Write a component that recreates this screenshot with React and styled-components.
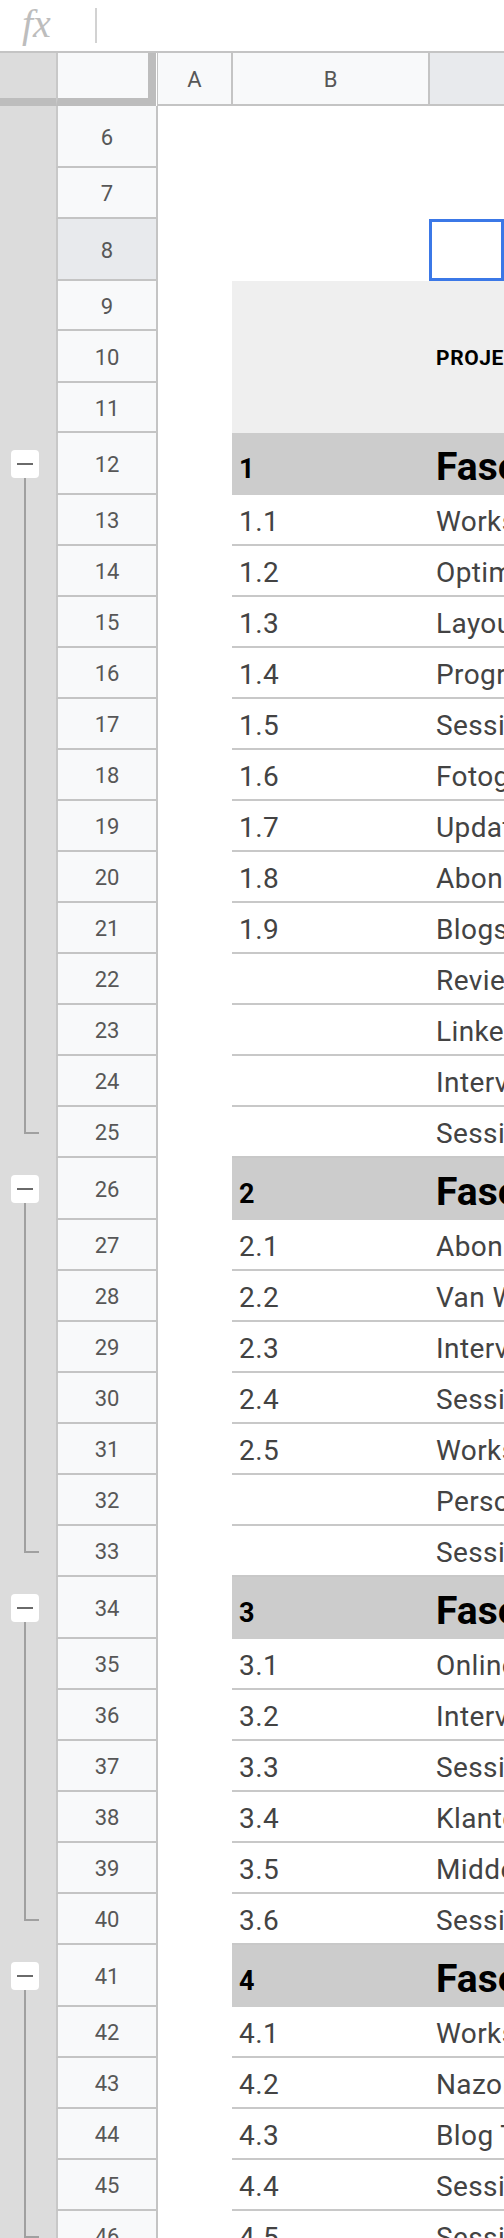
import React from 'react';
import styled, { createGlobalStyle } from 'styled-components';

const Global = createGlobalStyle`
  html, body { margin: 0; padding: 0; background: #fff; }
  body {
    width: 504px;
    height: 2238px;
    overflow: hidden;
    font-family: Roboto, "Noto Sans", Arial, sans-serif;
  }
`;

const Page = styled.div`
  width: 504px;
  height: 2238px;
  overflow: hidden;
  background: #fff;
`;

const FormulaBar = styled.div`
  height: 51px;
  border-bottom: 2px solid #c4c4c4;
  display: flex;
  align-items: center;
`;

const Fx = styled.span`
  font-family: "Liberation Serif", "DejaVu Serif", serif;
  font-style: italic;
  font-size: 40px;
  line-height: 1;
  color: #bdbdbd;
  margin-left: 22px;
  width: 73px;
  margin-top: -4px;
`;

const Divider = styled.div`
  width: 2px;
  height: 35px;
  background: #d2d2d2;
`;

const HeaderRow = styled.div`
  display: flex;
  height: 53px;
`;

const GutterCorner = styled.div`
  width: 56px;
  box-sizing: border-box;
  background: #dcdcdc;
  border-bottom: 8px solid #bdbdbd;
`;

const Corner = styled.div`
  width: 102px;
  box-sizing: border-box;
  border-right: 1px solid #c4c4c4;
  display: flex;
`;

const CornerFill = styled.div`
  width: 100px;
  box-sizing: border-box;
  background: #f8f9fa;
  border-left: 2px solid #c8c8c8;
  border-right: 8px solid #bdbdbd;
  border-bottom: 8px solid #bdbdbd;
`;

const ColHeader = styled.div`
  width: ${(p) => (p.$w ? `${p.$w}px` : 'auto')};
  flex: ${(p) => (p.$w ? 'none' : '1')};
  box-sizing: border-box;
  background: ${(p) => (p.$active ? '#e8eaed' : '#f8f9fa')};
  border-right: ${(p) => (p.$w ? '2px solid #c4c4c4' : 'none')};
  border-bottom: 2px solid #c4c4c4;
  display: flex;
  align-items: center;
  justify-content: center;
  font-size: 22px;
  color: #575757;
  padding-top: 2px;
`;

const Row = styled.div`
  display: flex;
  height: ${(p) => p.$h}px;
`;

const Gutter = styled.div`
  width: 56px;
  flex: none;
  background: #dcdcdc;
  display: flex;
  flex-direction: column;
  align-items: flex-start;
  box-sizing: border-box;
  padding-top: ${(p) => p.$padTop || 0}px;
`;

const GroupButton = styled.div`
  width: 28px;
  height: 28px;
  flex: none;
  margin-left: 11px;
  background: #fff;
  border-radius: 4px;
  display: flex;
  align-items: center;
  justify-content: center;
`;

const Minus = styled.div`
  width: 16px;
  height: 2px;
  background: #6a6a6a;
`;

const GroupLine = styled.div`
  margin-left: 24px;
  width: 2px;
  flex: 1;
  background: #a0a0a0;
`;

const GroupElbow = styled.div`
  margin-left: 24px;
  width: 15px;
  height: calc(50% + 1px);
  box-sizing: border-box;
  border-left: 2px solid #a0a0a0;
  border-bottom: 2px solid #a0a0a0;
`;

const RowHeader = styled.div`
  width: 102px;
  flex: none;
  box-sizing: border-box;
  background: ${(p) => (p.$active ? '#e8eaed' : '#f8f9fa')};
  border-left: 2px solid #c8c8c8;
  border-right: 2px solid #c4c4c4;
  border-bottom: 2px solid #c4c4c4;
  display: flex;
  align-items: center;
  justify-content: center;
  font-size: 22px;
  color: #575757;
  padding-top: 2px;
`;

const BlankCol = styled.div`
  width: 74px;
  flex: none;
  background: #fff;
`;

const bgFor = (kind) =>
  kind === 'phase' ? '#cccccc' : kind === 'head' ? '#efefef' : '#ffffff';

const Cell = styled.div`
  width: ${(p) => (p.$w ? `${p.$w}px` : 'auto')};
  flex: ${(p) => (p.$w ? 'none' : '1')};
  min-width: 0;
  box-sizing: border-box;
  background: ${(p) => bgFor(p.$kind)};
  border-bottom: ${(p) => (p.$kind === 'task' ? '2px solid #c8c8c8' : 'none')};
  box-shadow: ${(p) => (p.$selected ? 'inset 0 0 0 3px #3b78e7' : 'none')};
  display: flex;
  align-items: center;
  padding-left: ${(p) => p.$pad}px;
  overflow: hidden;
  white-space: nowrap;
`;

const TaskText = styled.span`
  font-size: 28px;
  letter-spacing: 0.4px;
  color: #434343;
  padding-top: 3px;
`;

const PhaseNum = styled.span`
  font-size: 27px;
  font-weight: 700;
  color: #000;
  padding-top: 9px;
`;

const PhaseTitle = styled.span`
  font-size: 39px;
  font-weight: 700;
  color: #000;
  padding-top: 5px;
`;

const ProjectTitle = styled.span`
  font-size: 21px;
  letter-spacing: 0.6px;
  font-weight: 700;
  color: #000;
  padding-top: 2px;
`;

const T = 51;
const ROWS = [
  { n: 6, h: 62 },
  { n: 7, h: 51 },
  { n: 8, h: 62, selected: true },
  { n: 9, h: 50, kind: 'head' },
  { n: 10, h: 52, kind: 'head', title: 'PROJECTPLANNING' },
  { n: 11, h: 50, kind: 'head' },
  { n: 12, h: 62, kind: 'phase', num: '1', title: 'Fase 1: Voorbereiding', group: 'start' },
  { n: 13, num: '1.1', title: 'Workshop kick-off', group: 'mid' },
  { n: 14, num: '1.2', title: 'Optimalisatie website', group: 'mid' },
  { n: 15, num: '1.3', title: 'Layout nieuwsbrief', group: 'mid' },
  { n: 16, num: '1.4', title: 'Programma opstellen', group: 'mid' },
  { n: 17, num: '1.5', title: 'Sessie 1', group: 'mid' },
  { n: 18, num: '1.6', title: 'Fotografie', group: 'mid' },
  { n: 19, num: '1.7', title: 'Update website', group: 'mid' },
  { n: 20, num: '1.8', title: 'Abonnement nieuwsbrief', group: 'mid' },
  { n: 21, num: '1.9', title: 'Blogs schrijven', group: 'mid' },
  { n: 22, title: 'Review', group: 'mid' },
  { n: 23, title: 'LinkedIn posts', group: 'mid' },
  { n: 24, title: 'Interview', group: 'mid' },
  { n: 25, title: 'Sessie 2', group: 'end' },
  { n: 26, h: 62, kind: 'phase', num: '2', title: 'Fase 2: Uitvoering', group: 'start' },
  { n: 27, num: '2.1', title: 'Abonnement', group: 'mid' },
  { n: 28, num: '2.2', title: 'Van Wens naar Plan', group: 'mid' },
  { n: 29, num: '2.3', title: 'Interview', group: 'mid' },
  { n: 30, num: '2.4', title: 'Sessie 3', group: 'mid' },
  { n: 31, num: '2.5', title: 'Workshop', group: 'mid' },
  { n: 32, title: 'Persoonlijk gesprek', group: 'mid' },
  { n: 33, title: 'Sessie 4', group: 'end' },
  { n: 34, h: 62, kind: 'phase', num: '3', title: 'Fase 3: Verdieping', group: 'start' },
  { n: 35, num: '3.1', title: 'Online training', group: 'mid' },
  { n: 36, num: '3.2', title: 'Interview', group: 'mid' },
  { n: 37, num: '3.3', title: 'Sessie 5', group: 'mid' },
  { n: 38, num: '3.4', title: 'Klantenreis', group: 'mid' },
  { n: 39, num: '3.5', title: 'Middelen', group: 'mid' },
  { n: 40, num: '3.6', title: 'Sessie 6', group: 'end' },
  { n: 41, h: 62, kind: 'phase', num: '4', title: 'Fase 4: Afronding', group: 'start' },
  { n: 42, num: '4.1', title: 'Workshop', group: 'mid' },
  { n: 43, num: '4.2', title: 'Nazorg', group: 'mid' },
  { n: 44, num: '4.3', title: 'Blog Tips', group: 'mid' },
  { n: 45, num: '4.4', title: 'Sessie 7', group: 'mid' },
  { n: 46, num: '4.5', title: 'Sessie 8', group: 'end' },
];

function GutterPart({ group, h }) {
  if (group === 'start') {
    return (
      <Gutter $padTop={Math.round((h - 28) / 2)}>
        <GroupButton>
          <Minus />
        </GroupButton>
        <GroupLine />
      </Gutter>
    );
  }
  if (group === 'mid') {
    return (
      <Gutter>
        <GroupLine />
      </Gutter>
    );
  }
  if (group === 'end') {
    return (
      <Gutter>
        <GroupElbow />
      </Gutter>
    );
  }
  return <Gutter />;
}

function SheetRow({ row }) {
  const h = row.h || T;
  const kind = row.kind || (row.num || row.title ? 'task' : 'blank');
  return (
    <Row $h={h}>
      <GutterPart group={row.group} h={h} />
      <RowHeader $active={row.selected}>{row.n}</RowHeader>
      <BlankCol />
      <Cell $w={197} $kind={kind} $pad={7}>
        {kind === 'phase' && <PhaseNum>{row.num}</PhaseNum>}
        {kind === 'task' && row.num && <TaskText>{row.num}</TaskText>}
      </Cell>
      <Cell $kind={kind} $pad={7} $selected={row.selected}>
        {kind === 'phase' && <PhaseTitle>{row.title}</PhaseTitle>}
        {kind === 'task' && <TaskText>{row.title}</TaskText>}
        {kind === 'head' && row.title && <ProjectTitle>{row.title}</ProjectTitle>}
      </Cell>
    </Row>
  );
}

export default function App() {
  return (
    <Page>
      <Global />
      <FormulaBar>
        <Fx>fx</Fx>
        <Divider />
      </FormulaBar>
      <HeaderRow>
        <GutterCorner />
        <Corner>
          <CornerFill />
        </Corner>
        <ColHeader $w={75}>A</ColHeader>
        <ColHeader $w={197}>B</ColHeader>
        <ColHeader $active />
      </HeaderRow>
      {ROWS.map((r) => (
        <SheetRow key={r.n} row={r} />
      ))}
    </Page>
  );
}
